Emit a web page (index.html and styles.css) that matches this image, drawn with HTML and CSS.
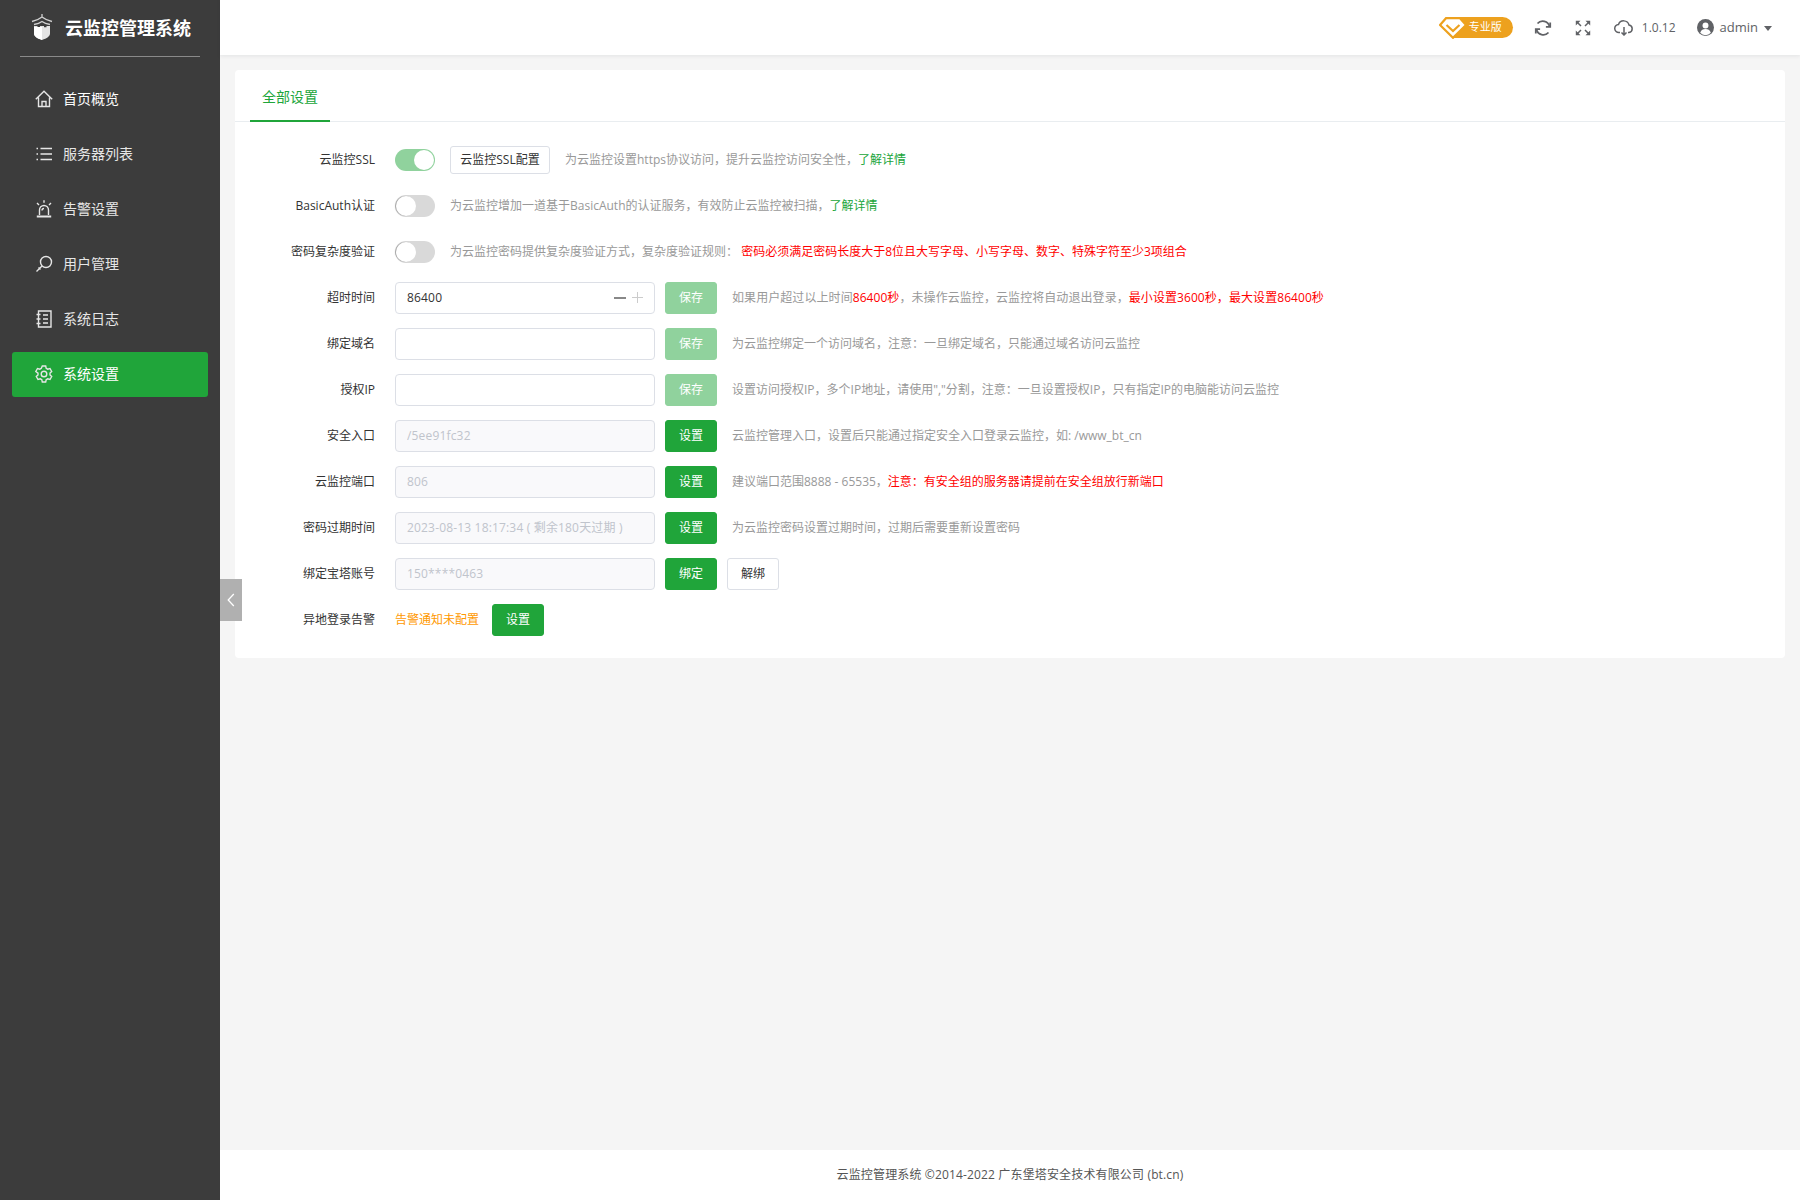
FILE: index.html
```html
<!DOCTYPE html>
<html lang="zh-CN">
<head>
<meta charset="utf-8">
<title>云监控管理系统</title>
<link rel="stylesheet" href="styles.css">
</head>
<body>
<div class="app">
  <aside class="sidebar">
    <div class="brand">
      <svg class="brand-icon" viewBox="0 0 22 26"><path class="roof" d="M11 0v3M1 7.500C5 6.500 8.500 5 11 3c2.500 2 6 3.500 10 4.500M3 10.500C6.500 10 9 9 11 7.500c2 1.500 4.500 2.500 8 3"/><path d="M3 12h3.500v1.200H9V12h4v1.200h2.500V12H19v7.500c0 2.800-3 4.800-8 6.500-5-1.700-8-3.700-8-6.500z" fill="#e4e4e4"/><path d="M3 13h8v13c-5-1.700-8-3.700-8-6.500z" fill="#fff"/></svg>
      <span class="brand-name">云监控管理系统</span>
    </div>
    <nav class="menu">
      <a class="menu-item">
        <svg class="menu-icon" viewBox="0 0 18 18"><path d="M.8 9.200 9 1.300l8.200 7.900M3.500 7.500V16.500h11V7.500M7 16.500v-5h4v5" /></svg>
        <span class="menu-home">首页概览</span>
      </a>
      <a class="menu-item">
        <svg class="menu-icon" viewBox="0 0 18 18"><path d="M5.500 3.500h11.500M5.500 9h11.500M5.500 14.500h11.500M1.500 3.500h1.500M1.500 9h1.500M1.500 14.500h1.500"/></svg>
        <span>服务器列表</span>
      </a>
      <a class="menu-item">
        <svg class="menu-icon" viewBox="0 0 18 18"><path d="M4.500 15V10a4.500 4.500 0 0 1 9 0v5M9 .3v2.500M2 3l2 2M16 3l-2 2M7 10.500a2 2 0 0 1 2-2"/><path class="thick" d="M1.800 16.500h14.400"/></svg>
        <span>告警设置</span>
      </a>
      <a class="menu-item">
        <svg class="menu-icon" viewBox="0 0 18 18"><circle cx="11" cy="7" r="5.500"/><path d="M7 11 1.500 16.500M3.500 12.500l2 2"/></svg>
        <span>用户管理</span>
      </a>
      <a class="menu-item">
        <svg class="menu-icon" viewBox="0 0 18 18"><path d="M3.500 1h12.500v16H3.500zM1.500 4.500h4M1.500 9h4M1.500 13.500h4M8 5h5M8 9h5M8 13h5"/></svg>
        <span>系统日志</span>
      </a>
      <a class="menu-item is-active">
        <svg class="menu-icon" viewBox="0 0 18 18"><path d="M7.300 1h3.400l.5 2.300 1.500.9 2.300-.7 1.700 3-1.700 1.600v1.800l1.700 1.600-1.700 3-2.300-.7-1.500.9-.5 2.300H7.300l-.5-2.300-1.500-.9-2.300.7-1.700-3 1.700-1.600V8.100L.8 6.500l1.700-3 2.300.7 1.500-.9z"/><circle cx="9" cy="9" r="2.800"/></svg>
        <span>系统设置</span>
      </a>
    </nav>
  </aside>

  <button class="collapse" type="button" aria-label="收起">
    <svg viewBox="0 0 10 18"><path d="M8.500 1.500 1.500 9l7 7.500"/></svg>
  </button>

  <div class="main">
    <header class="topbar">
      <div class="pro-badge">
        <svg class="pro-gem" viewBox="0 0 28 22"><path d="M7 1.200h14L27 8 14 20.800 1 8z" fill="#fff" stroke="#eda11e" stroke-width="2.200"/><path d="M7.500 8 14 14l6.500-6" fill="none" stroke="#eda11e" stroke-width="2.200"/></svg>
        <span class="pro-text">专业版</span>
      </div>
      <svg class="top-icon ti-refresh" viewBox="0 0 18 18"><path d="M15.500 7.500A7 7 0 0 0 3.500 4.500M2.500 10.500A7 7 0 0 0 14.500 13.500"/><path d="M16.200 3.500V7.800h-4.300M1.800 14.500v-4.300h4.300"/></svg>
      <svg class="top-icon ti-full" viewBox="0 0 16 16"><path d="M6 6 2.500 2.500M10 6l3.500-3.500M6 10l-3.500 3.500M10 10l3.500 3.500"/><path class="ti-head" d="M.8.800h4.700L.8 5.500zM15.200.800v4.700L10.500.800zM.8 15.200v-4.700l4.700 4.700zM15.200 15.200h-4.700l4.700-4.700z"/></svg>
      <span class="version">
        <svg class="top-icon ti-cloud" viewBox="0 0 20 16"><path d="M6 12.500H5A4 4 0 0 1 4.500 4.500a5.500 5.500 0 0 1 10.500.5 3.800 3.800 0 0 1 0 7.500h-1M10 7v8M7.500 12.500 10 15l2.500-2.500"/></svg>
        <span class="version-text">1.0.12</span>
      </span>
      <span class="account">
        <svg class="avatar" viewBox="0 0 16 16"><circle cx="8" cy="8" r="8" fill="#606266"/><circle cx="8" cy="6.200" r="2.800" fill="#fff"/><path d="M3 13c.8-2.500 2.700-3.500 5-3.500s4.200 1 5 3.500a6.800 6.800 0 0 1-10 0z" fill="#fff"/></svg>
        <span class="account-name">admin</span>
        <i class="caret"></i>
      </span>
    </header>

    <div class="content">
      <section class="card">
        <div class="tabs"><div class="tab">全部设置</div></div>
        <div class="form">
          <div class="row">
            <label class="label">云监控SSL</label>
            <span class="switch is-on"></span>
            <button class="btn btn-plain btn-ssl" type="button">云监控SSL配置</button>
            <p class="desc">为云监控设置https协议访问，提升云监控访问安全性，<a class="link">了解详情</a></p>
          </div>
          <div class="row">
            <label class="label">BasicAuth认证</label>
            <span class="switch"></span>
            <p class="desc">为云监控增加一道基于BasicAuth的认证服务，有效防止云监控被扫描，<a class="link">了解详情</a></p>
          </div>
          <div class="row">
            <label class="label">密码复杂度验证</label>
            <span class="switch"></span>
            <p class="desc">为云监控密码提供复杂度验证方式，复杂度验证规则： <em class="warn">密码必须满足密码长度大于8位且大写字母、小写字母、数字、特殊字符至少3项组合</em></p>
          </div>
          <div class="row">
            <label class="label">超时时间</label>
            <div class="number">
              <input class="input" value="86400">
              <i class="minus"></i><i class="plus"></i>
            </div>
            <button class="btn btn-muted" type="button">保存</button>
            <p class="desc desc-digits">如果用户超过以上时间<em class="warn">86400秒</em>，未操作云监控，云监控将自动退出登录，<em class="warn">最小设置3600秒，最大设置86400秒</em></p>
          </div>
          <div class="row">
            <label class="label">绑定域名</label>
            <input class="input">
            <button class="btn btn-muted" type="button">保存</button>
            <p class="desc">为云监控绑定一个访问域名，注意：一旦绑定域名，只能通过域名访问云监控</p>
          </div>
          <div class="row">
            <label class="label">授权IP</label>
            <input class="input">
            <button class="btn btn-muted" type="button">保存</button>
            <p class="desc">设置访问授权IP，多个IP地址，请使用","分割，注意：一旦设置授权IP，只有指定IP的电脑能访问云监控</p>
          </div>
          <div class="row">
            <label class="label">安全入口</label>
            <input class="input" disabled value="/5ee91fc32">
            <button class="btn btn-primary" type="button">设置</button>
            <p class="desc">云监控管理入口，设置后只能通过指定安全入口登录云监控，如: /www_bt_cn</p>
          </div>
          <div class="row">
            <label class="label">云监控端口</label>
            <input class="input" disabled value="806">
            <button class="btn btn-primary" type="button">设置</button>
            <p class="desc">建议端口范围8888 - 65535，<em class="warn">注意：有安全组的服务器请提前在安全组放行新端口</em></p>
          </div>
          <div class="row">
            <label class="label">密码过期时间</label>
            <input class="input" disabled value="2023-08-13 18:17:34 ( 剩余180天过期 )">
            <button class="btn btn-primary" type="button">设置</button>
            <p class="desc">为云监控密码设置过期时间，过期后需要重新设置密码</p>
          </div>
          <div class="row">
            <label class="label">绑定宝塔账号</label>
            <input class="input" disabled value="150****0463">
            <button class="btn btn-primary" type="button">绑定</button>
            <button class="btn btn-plain" type="button">解绑</button>
          </div>
          <div class="row">
            <label class="label">异地登录告警</label>
            <span class="notice">告警通知未配置</span>
            <button class="btn btn-primary" type="button">设置</button>
          </div>
        </div>
      </section>
    </div>

    <footer class="footer">云监控管理系统 ©2014-2022 广东堡塔安全技术有限公司 (bt.cn)</footer>
  </div>
</div>
</body>
</html>
```

FILE: styles.css
```css
* { box-sizing: border-box; }
html, body { margin: 0; height: 100%; }
body {
  font-family: "Open Sans", "Noto Sans CJK SC", sans-serif;
  font-size: 12px;
  color: #333;
  background: #f5f5f5;
}
.app { position: relative; display: flex; height: 100vh; overflow: hidden; }

/* sidebar */
.sidebar { flex: 0 0 220px; background: #3c3c3c; color: #fff; }
.brand {
  display: flex;
  align-items: center;
  height: 57px;
  margin: 0 20px;
  padding: 0 0 0 11px;
  border-bottom: 1px solid #8a8a8a;
}
.brand-icon { width: 22px; height: 26px; margin-right: 12px; margin-top: -3px; flex: none; }
.roof { fill: none; stroke: #d0d0d0; stroke-width: 1.3; }
.brand-name { font-size: 18px; font-weight: 700; line-height: 56px; margin-top: -1px; }
.menu { display: flex; flex-direction: column; gap: 10px; padding: 20px 12px 0; }
.menu-item {
  display: flex;
  align-items: center;
  height: 45px;
  padding-left: 23px;
  border-radius: 3px;
  font-size: 14px;
  color: #e6e6e6;
}
.menu-item span { padding-bottom: 4px; }
.menu-home { color: #fff; }
.menu-item.is-active { background: #20a53a; color: #fff; }
.menu-icon {
  width: 18px; height: 18px; margin-right: 10px; margin-bottom: 2px; flex: none;
  fill: none; stroke: #e6e6e6; stroke-width: 1.4;
}
.menu-icon .thick { stroke-width: 2; }

/* collapse handle */
.collapse {
  position: absolute; left: 220px; top: 579px;
  width: 22px; height: 42px; padding: 0; border: 0;
  background: #b0b0b0; display: flex; align-items: center; justify-content: center;
}
.collapse svg { width: 8px; height: 16px; fill: none; stroke: #fff; stroke-width: 1.6; }

/* main */
.main { flex: 1; min-width: 0; display: flex; flex-direction: column; }
.topbar {
  flex: 0 0 55px;
  display: flex;
  align-items: center;
  justify-content: flex-end;
  padding-right: 28px;
  background: #fff;
  box-shadow: 0 1px 4px rgba(0, 21, 41, .08);
  position: relative;
  color: #606266;
  font-size: 13px;
}
.pro-badge { display: flex; align-items: center; margin-right: 21px; }
.pro-gem { width: 28px; height: 22px; margin-right: -14px; margin-top: 1px; position: relative; z-index: 1; }
.pro-text {
  display: block; width: 60px; height: 21px; line-height: 19px;
  padding-left: 16px; border-radius: 0 11px 11px 0;
  background: #eda11e; color: #fff; font-size: 11px;
}
.top-icon { fill: none; stroke: #606266; stroke-width: 1.800; flex: none; }
.ti-refresh { width: 18px; height: 18px; margin-right: 23px; }
.ti-full { width: 16px; height: 16px; margin-right: 23px; stroke-width: 1.500; }
.ti-head { fill: #606266; stroke: none; }
.version { display: flex; align-items: center; margin-right: 21px; }
.version-text { font-size: 12px; }
.ti-cloud { width: 20px; height: 16px; margin-right: 8px; stroke-width: 1.500; }
.account { display: flex; align-items: center; }
.avatar { width: 17px; height: 17px; margin-right: 6px; }
.account-name { padding-bottom: 2px; }
.caret {
  width: 0; height: 0; margin-left: 6px; margin-top: 2px;
  border-left: 4px solid transparent; border-right: 4px solid transparent;
  border-top: 5px solid #606266;
}

.content { flex: 1; padding: 15px; min-height: 0; }
.card { background: #fff; border-radius: 4px; }
.tabs { height: 52px; padding-left: 15px; border-bottom: 1px solid #e9edf0; }
.tab {
  width: 80px; height: 52px; line-height: 54px; text-align: center;
  font-size: 14px; color: #20a53a; border-bottom: 2px solid #20a53a;
}
.form { padding: 15px 0; }
.row { display: flex; align-items: center; height: 46px; }
.label { flex: 0 0 160px; padding-right: 20px; padding-bottom: 2px; text-align: right; color: #333; }

.switch {
  position: relative; flex: none; width: 40px; height: 22px;
  border-radius: 11px; background: #d9d9d9;
}
.switch::after {
  content: ""; position: absolute; left: 1px; top: 1px;
  width: 20px; height: 20px; border-radius: 50%; background: #fff;
  box-shadow: -1px 0 1px rgba(0,0,0,.25);
}
.switch.is-on { background: #90d29d; }
.switch.is-on::after { left: 19px; box-shadow: none; }

.input {
  display: block; flex: none; width: 260px; height: 32px; padding: 0 11px 2px;
  border: 1px solid #dcdfe6; border-radius: 4px; background: #fff;
  font: inherit; letter-spacing: .17px; color: #333; outline: 0;
}
.input:disabled { background: #f9f9fb; color: #c0c4cc; }
.number { position: relative; flex: none; width: 260px; }
.minus, .plus { position: absolute; top: 15px; height: 2px; }
.minus { left: 219px; width: 12px; background: #888; }
.plus { left: 237px; width: 11px; height: 1px; background: #ccc; }
.plus::after {
  content: ""; position: absolute; left: 5px; top: -5px;
  width: 1px; height: 11px; background: #ccc;
}

.btn {
  flex: none; width: 52px; height: 32px; margin-left: 10px; padding: 0 0 2px;
  border: 1px solid transparent; border-radius: 3px;
  font: inherit; color: #fff;
}
.btn-primary { background: #20a53a; border-color: #20a53a; }
.btn-muted { background: #90d29d; border-color: #90d29d; }
.btn-plain { background: #fff; border-color: #dcdfe6; color: #333; }
.btn-ssl { width: 100px; height: 28px; margin-left: 15px; }

.desc { margin: 0 0 0 15px; padding-bottom: 2px; color: #999; white-space: nowrap; }
.desc-digits { letter-spacing: .07px; }
.warn { font-style: normal; color: #f00; }
.link { color: #20a53a; }
.notice { flex: none; width: 84px; margin-right: 3px; padding-bottom: 2px; color: #f90; }

.footer {
  flex: 0 0 50px; display: flex; align-items: center; justify-content: center;
  padding-bottom: 2px; letter-spacing: .15px;
  background: #fff; color: #555;
}
```
